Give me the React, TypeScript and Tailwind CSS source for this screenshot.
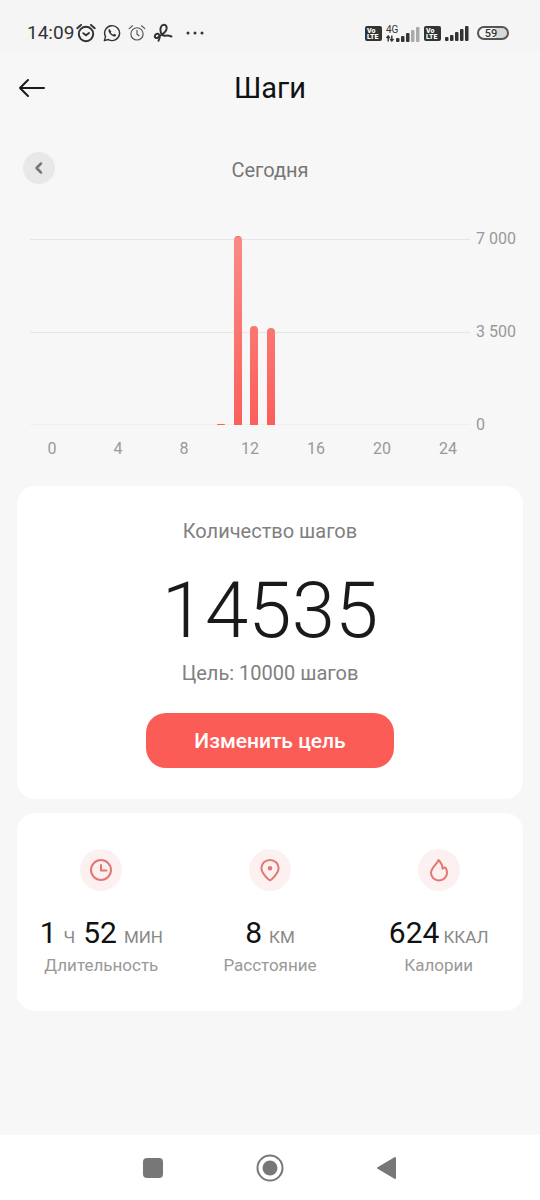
import type { ReactNode } from 'react';

type Stat = {
  id: string;
  label: string;
  tight?: boolean;
  values: { value: string; unit: string }[];
  icon: ReactNode;
};

const MAX_STEPS = 7000;

const hourly = Array.from({ length: 24 }, (_, hour) => {
  const known: Record<number, number> = { 10: 40, 11: 7100, 12: 3730, 13: 3640 };
  return { hour, steps: known[hour] ?? 0 };
});

const hourLabels = [0, 4, 8, 12, 16, 20, 24];

const stats: Stat[] = [
  {
    id: 'duration',
    label: 'Длительность',
    values: [
      { value: '1', unit: 'Ч' },
      { value: '52', unit: 'МИН' },
    ],
    icon: (
      <>
        <circle cx="12" cy="12" r="10" />
        <path d="M12 7v5.500h5.500" />
      </>
    ),
  },
  {
    id: 'distance',
    label: 'Расстояние',
    values: [{ value: '8', unit: 'КМ' }],
    icon: (
      <>
        <path d="M12 22.200c-1.100 0-8.600-6.800-8.600-12.100a8.600 8.200 0 0 1 17.200 0c0 5.300-7.500 12.100-8.600 12.100z" />
        <circle cx="12" cy="10.300" r="1.300" fill="currentColor" />
      </>
    ),
  },
  {
    id: 'calories',
    label: 'Калории',
    tight: true,
    values: [{ value: '624', unit: 'ККАЛ' }],
    icon: (
      <path d="M11.500 2C10.500 6 4 9.500 4 15a8 7.500 0 0 0 16 0c0-2.200-.3-3.600-1.200-5-.8-.6-1.800-.6-3.300.6C15.500 7 14 4.500 11.500 2z" />
    ),
  },
];

function AlarmIcon({ bold }: { bold?: boolean }) {
  return (
    <svg
      viewBox="0 0 20 20"
      className={bold ? 'h-5 w-5' : 'h-[18px] w-[18px] text-[#555]'}
      fill="none"
      stroke="currentColor"
      strokeWidth={bold ? 2 : 1.3}
      strokeLinecap="round"
    >
      <circle cx="10" cy="11" r={bold ? 7.2 : 6.8} />
      <path d="M1.300 5.200 5 2M18.700 5.200 15 2" />
      {bold ? <path d="m7.300 10.200 2.700 2 3-2.200" /> : <path d="M10 7v4.300l2.300 1.700" />}
    </svg>
  );
}

function WhatsAppIcon() {
  return (
    <svg viewBox="0 0 20 20" className="h-[18px] w-[18px]" fill="none" stroke="currentColor" strokeWidth="1.600">
      <path d="M1.500 18.500 2.800 14A8.300 8.300 0 1 1 6 17.300z" strokeLinejoin="round" />
      <path
        d="M7 5.600c-1.500.6-1.200 2.600.2 4.700 1.600 2.300 4.500 4 6 3.500 1-.4 1.400-1.200 1.300-1.900l-2-1-1.100 1.100c-1.200-.5-2.300-1.500-2.900-2.700l.8-1z"
        fill="currentColor"
        stroke="none"
      />
    </svg>
  );
}

function ScribbleIcon() {
  return (
    <svg
      viewBox="0 0 20 20"
      className="h-5 w-5"
      fill="none"
      stroke="currentColor"
      strokeWidth="2"
      strokeLinecap="round"
      strokeLinejoin="round"
    >
      <path d="M8 10C6.500 5.500 8 2 10.700 1.800c2.800-.1 3.600 2.700 2.500 5.400C11.800 10.500 8 12 4.800 14.500 3 16 1 14 2.200 12c1.300-2 4-1.500 4.500 1 .3 2-.2 3.200-1.200 4.700M8 10c1 2 2.700 3 4.500 2.700 2-.4 3.500-.2 6 .8" />
    </svg>
  );
}

function VolteBadge() {
  return (
    <svg viewBox="0 0 17 15" className="h-[15px] w-[17px]">
      <rect width="17" height="15" rx="2" fill="#333" />
      <text x="2" y="7" fill="#fff" fontSize="7" fontWeight="900">
        Vo
      </text>
      <text x="2" y="13" fill="#fff" fontSize="7" fontWeight="900">
        LTE
      </text>
    </svg>
  );
}

function SignalBars({ level }: { level: number }) {
  return (
    <svg viewBox="0 0 24 16" className="h-4 w-6">
      {[4, 6, 9, 12, 15].map((height, i) => (
        <rect
          key={height}
          x={i * 5}
          y={16 - height}
          width="3.500"
          height={height}
          rx="1"
          fill={i < level ? '#333' : '#aaa'}
        />
      ))}
    </svg>
  );
}

function StatusBar() {
  return (
    <div className="flex h-[52px] items-center justify-between bg-[#f5f5f5] pt-[14px] pr-[31px] pl-[27px] text-[#333]">
      <div className="flex items-center gap-[7px]">
        <div className="flex items-center gap-[2px]">
          <span className="text-[19px] leading-6">14:09</span>
          <AlarmIcon bold />
        </div>
        <WhatsAppIcon />
        <AlarmIcon />
        <ScribbleIcon />
        <svg viewBox="0 0 18 4" className="ml-[6px] h-1 w-[18px]" fill="currentColor">
          <circle cx="2" cy="2" r="1.500" />
          <circle cx="9" cy="2" r="1.500" />
          <circle cx="16" cy="2" r="1.500" />
        </svg>
      </div>
      <div className="flex items-center">
        <VolteBadge />
        <div className="ml-1 flex items-end">
          <div className="flex w-[10px] flex-col">
            <span className="text-[10px] leading-[10px] whitespace-nowrap">4G</span>
            <svg viewBox="0 0 8 7" className="h-[7px] w-2" fill="none" stroke="currentColor" strokeWidth="1.400">
              <path d="M2.200 6.500V1.500M.5 3 2.200 1 3.800 3M5.800.5v5M4.200 4l1.600 2 1.700-2" />
            </svg>
          </div>
          <SignalBars level={3} />
        </div>
        <div className="mx-1">
          <VolteBadge />
        </div>
        <SignalBars level={5} />
        <div className="ml-2 flex h-[14px] w-8 items-center justify-center rounded-full border-2 border-[#555] bg-linear-to-r from-transparent from-60% to-[#d8d8d8] to-60% text-[11px] leading-[11px] font-medium">
          <span className="pr-1">59</span>
        </div>
      </div>
    </div>
  );
}

function StepsChart() {
  return (
    <section className="mt-[55px] pr-6 pl-[30px] text-base leading-5 text-[#999]">
      <div className="flex gap-[6px]">
        <div className="relative h-[186px] flex-1">
          <div className="flex h-full flex-col justify-between">
            <div className="h-px bg-[#e6e6e6]" />
            <div className="h-px bg-[#e6e6e6]" />
            <div className="h-px bg-[#efefef]" />
          </div>
          <div className="absolute inset-0 flex items-end px-[22px]">
            {hourly.map(({ hour, steps }) => (
              <div key={hour} className="flex h-full flex-1 items-end">
                {steps > 0 && (
                  <div
                    className="w-2 shrink-0 rounded-t bg-[#fb5f5a] bg-linear-to-t from-[#fb5f5a] to-[#fa8a85] bg-[length:100%_188px] bg-bottom bg-no-repeat"
                    style={{ height: `${(steps / MAX_STEPS) * 100}%` }}
                  />
                )}
              </div>
            ))}
          </div>
        </div>
        <div className="-my-[10px] flex w-10 flex-col justify-between whitespace-nowrap">
          <span>7 000</span>
          <span>3 500</span>
          <span>0</span>
        </div>
      </div>
      <div className="mt-[14px] mr-[46px] flex justify-between px-[10px]">
        {hourLabels.map((label) => (
          <span key={label} className="w-6 text-center">
            {label}
          </span>
        ))}
      </div>
    </section>
  );
}

export default function App() {
  return (
    <div className="flex min-h-screen flex-col bg-[#f7f7f7] font-[Roboto,'Noto_Sans',sans-serif]">
      <StatusBar />

      {/* Header */}
      <header className="grid h-[72px] grid-cols-[48px_1fr_48px] items-center px-[18px]">
        <button aria-label="Назад" className="cursor-pointer text-[#1a1a1a]">
          <svg
            viewBox="0 0 28 20"
            className="h-5 w-7"
            fill="none"
            stroke="currentColor"
            strokeWidth="2"
            strokeLinecap="round"
            strokeLinejoin="round"
          >
            <path d="M26 10H2M10 2l-8 8 8 8" />
          </svg>
        </button>
        <h1 className="text-center text-[29px] leading-9 text-[#111]">Шаги</h1>
      </header>

      {/* Day switcher */}
      <div className="mt-7 grid grid-cols-[32px_1fr_32px] items-center px-[23px]">
        <button
          aria-label="Предыдущий день"
          className="flex h-8 w-8 cursor-pointer items-center justify-center rounded-full bg-[#e8e8e8] text-[#777]"
        >
          <svg
            viewBox="0 0 12 14"
            className="h-[14px] w-3"
            fill="none"
            stroke="currentColor"
            strokeWidth="2.500"
            strokeLinecap="round"
            strokeLinejoin="round"
          >
            <path d="M8 2.500 3.500 7 8 11.500" />
          </svg>
        </button>
        <p className="pt-1 text-center text-xl leading-6 text-[#777]">Сегодня</p>
      </div>

      <StepsChart />

      <main className="mt-[27px] flex flex-col gap-[14px] px-[17px]">
        {/* Steps total */}
        <section className="flex flex-col items-center rounded-[18px] bg-white pt-[33px] pb-[31px]">
          <h2 className="text-xl leading-6 text-[#808080]">Количество шагов</h2>
          <p className="mt-7 text-[78px] leading-[80px] font-[350] text-[#1a1a1a]">14535</p>
          <p className="mt-[10px] text-xl leading-6 text-[#808080]">Цель: 10000 шагов</p>
          <button className="mt-7 h-[55px] w-[248px] cursor-pointer rounded-[20px] bg-[#fc5c56] pt-[2px] text-[21px] font-medium text-white">
            Изменить цель
          </button>
        </section>

        {/* Details */}
        <section className="grid grid-cols-3 rounded-[18px] bg-white pt-9 pb-9">
          {stats.map((stat) => (
            <div key={stat.id} className="flex flex-col items-center">
              <div className="flex h-[42px] w-[42px] items-center justify-center rounded-full bg-[#fcf0f0]">
                <svg
                  viewBox="0 0 24 24"
                  className="h-6 w-6 text-[#e27872]"
                  fill="none"
                  stroke="currentColor"
                  strokeWidth="2"
                  strokeLinecap="round"
                  strokeLinejoin="round"
                >
                  {stat.icon}
                </svg>
              </div>
              <div className="mt-6 flex items-baseline gap-2">
                {stat.values.map(({ value, unit }) => (
                  <p
                    key={unit}
                    className={`flex items-baseline text-[30px] leading-9 whitespace-nowrap text-[#111] ${
                      stat.tight ? 'gap-1' : 'gap-[7px]'
                    }`}
                  >
                    {value}
                    <span className="text-[17px] text-[#888]">{unit}</span>
                  </p>
                ))}
              </div>
              <p className="text-[17px] leading-5 text-[#999]">{stat.label}</p>
            </div>
          ))}
        </section>
      </main>

      {/* System navigation */}
      <nav className="mt-auto flex h-[65px] items-center justify-center gap-[91px] bg-white text-[#777]">
        <button aria-label="Недавние" className="cursor-pointer">
          <svg viewBox="0 0 24 24" className="h-6 w-6" fill="currentColor">
            <rect x="2" y="2" width="20" height="20" rx="4" />
          </svg>
        </button>
        <button aria-label="Домой" className="cursor-pointer">
          <svg viewBox="0 0 28 28" className="h-7 w-7" fill="none" stroke="currentColor" strokeWidth="2">
            <circle cx="14" cy="14" r="12.500" />
            <circle cx="14" cy="14" r="7.500" fill="currentColor" stroke="none" />
          </svg>
        </button>
        <button aria-label="Назад" className="cursor-pointer">
          <svg
            viewBox="0 0 24 24"
            className="h-6 w-6"
            fill="currentColor"
            stroke="currentColor"
            strokeWidth="2"
            strokeLinejoin="round"
          >
            <path d="M20 2v20L3 12z" />
          </svg>
        </button>
      </nav>
    </div>
  );
}
